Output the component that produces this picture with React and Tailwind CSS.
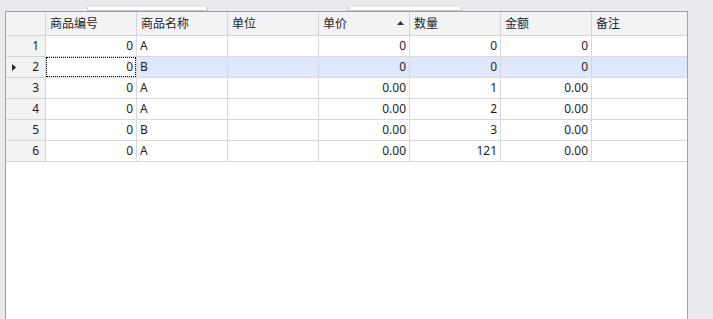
import React from "react";

const cols = ["商品编号", "商品名称", "单位", "单价", "数量", "金额", "备注"];
const rows = [
  ["0", "A", "", "0", "0", "0", ""],
  ["0", "B", "", "0", "0", "0", ""],
  ["0", "A", "", "0.00", "1", "0.00", ""],
  ["0", "A", "", "0.00", "2", "0.00", ""],
  ["0", "B", "", "0.00", "3", "0.00", ""],
  ["0", "A", "", "0.00", "121", "0.00", ""],
];
const rightAlign = [true, false, false, true, true, true, false];

const font = { fontFamily: '"Noto Sans", "Noto Sans CJK SC", sans-serif' };

export default function App() {
  return (
    <div
      className="w-[713px] h-[319px] bg-[#e9eaee] overflow-hidden text-[12px] text-[#1e1e1e]"
      style={font}
    >
      <div className="h-[11px] flex items-end">
        <div className="ml-[87px] w-[121px] h-[4px] bg-white border border-t-0 border-[#c4c6cc]" />
        <div className="ml-[140px] w-[114px] h-[4px] bg-white border border-t-0 border-[#c4c6cc]" />
      </div>
      <div className="ml-[5px] w-[683px] h-[320px] bg-white border border-b-0 border-[#9fa1a8]">
        <div className="grid grid-cols-[40px_repeat(6,91px)_95px]">
          <div className="h-[24px] bg-[#f3f3f5] border-r border-b border-[#d3d4da]" />
          {cols.map((c, i) => (
            <div
              key={c}
              className={`h-[24px] bg-[#f3f3f5] border-b border-[#d3d4da] flex items-center pl-[4px] pr-[4px] leading-none ${
                i < 6 ? "border-r" : ""
              }`}
            >
              <span className="flex-1 pt-[1px]">{c}</span>
              {c === "单价" && (
                <svg width="7" height="4" viewBox="0 0 7 4" className="mr-[1px] mb-[1px]">
                  <polygon points="3.5,0 7,4 0,4" fill="#333" />
                </svg>
              )}
            </div>
          ))}
          {rows.map((r, ri) => {
            const sel = ri === 1;
            return (
              <React.Fragment key={ri}>
                <div className="h-[21px] bg-[#f3f3f5] border-r border-b border-[#d3d4da] flex items-center pr-[6px] relative">
                  {sel && (
                    <svg width="4" height="7" viewBox="0 0 4 7" className="absolute left-[6px] top-[7px]">
                      <polygon points="0,0 4,3.5 0,7" fill="#222" />
                    </svg>
                  )}
                  <span className="ml-auto">{ri + 1}</span>
                </div>
                {r.map((v, ci) => {
                  const focus = sel && ci === 0;
                  return (
                    <div
                      key={ci}
                      className={`h-[21px] border-b border-[#d8d9de] flex items-center px-[3px] relative ${
                        ci < 6 ? "border-r" : ""
                      } ${sel && !focus ? "bg-[#dfe7fa]" : "bg-white"} ${
                        rightAlign[ci] ? "justify-end" : "justify-start"
                      }`}
                    >
                      {focus && (
                        <div className="absolute left-0 top-0 right-0 bottom-0 border border-dotted border-black" />
                      )}
                      <span className="pb-[1px]">{v}</span>
                    </div>
                  );
                })}
              </React.Fragment>
            );
          })}
        </div>
      </div>
    </div>
  );
}
